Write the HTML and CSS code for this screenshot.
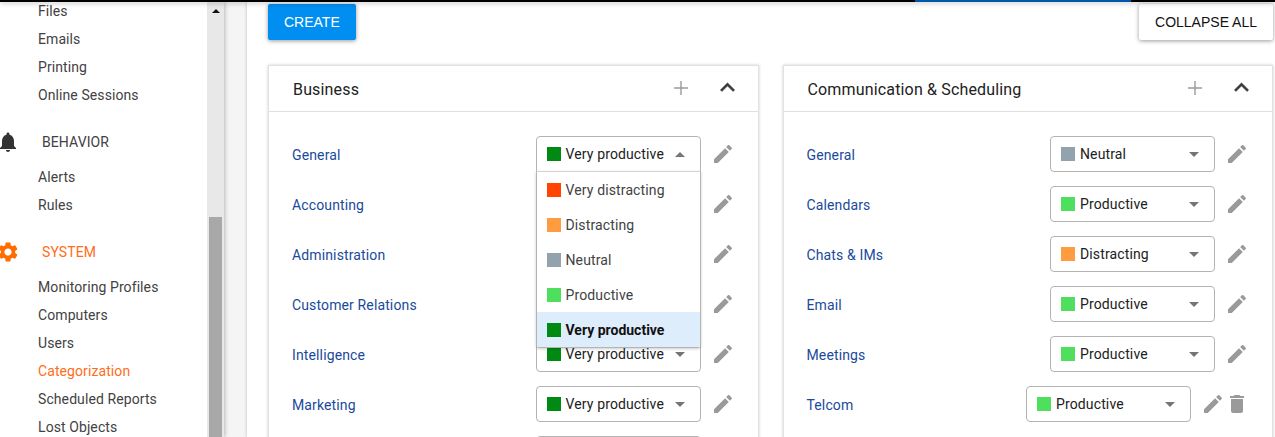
FILE: index.html
```html
<!DOCTYPE html>
<html lang="en">
<head>
<meta charset="utf-8">
<title>Categorization</title>
<link rel="stylesheet" href="styles.css">
<svg class="defs" width="0" height="0">
  <symbol id="i-edit" viewBox="0 0 24 24"><path d="M3 17.25V21h3.75L17.81 9.94l-3.75-3.75L3 17.25zM20.71 7.04c.39-.39.39-1.02 0-1.41l-2.34-2.34c-.39-.39-1.02-.39-1.41 0l-1.83 1.83 3.75 3.75 1.83-1.83z"/></symbol>
  <symbol id="i-trash" viewBox="0 0 24 24"><path d="M6 19c0 1.1.9 2 2 2h8c1.1 0 2-.9 2-2V7H6v12zM19 4h-3.5l-1-1h-5l-1 1H5v2h14V4z"/></symbol>
  <symbol id="i-less" viewBox="0 0 24 24"><path d="M12 8l-6 6 1.41 1.41L12 10.83l4.59 4.58L18 14z"/></symbol>
  <symbol id="i-add" viewBox="0 0 24 24"><path d="M19 12.7h-6.3V19h-1.4v-6.3H5v-1.4h6.3V5h1.4v6.3H19z"/></symbol>
</svg>
</head>
<body>
<div class="topbar"><span class="topbar-progress"></span></div>
<div class="layout">
  <aside class="sidebar">
    <nav class="nav">
      <ul class="nav-list nav-list-first">
        <li>Files</li><li>Emails</li><li>Printing</li><li>Online Sessions</li>
      </ul>
      <div class="nav-head">
        <svg class="nav-icon icon-dark" viewBox="0 0 24 24"><path d="M12 22c1.1 0 2-.9 2-2h-4c0 1.1.89 2 2 2zm6-6v-5c0-3.07-1.64-5.64-4.5-6.32V4c0-.83-.67-1.5-1.5-1.5s-1.5.67-1.5 1.5v.68C7.63 5.36 6 7.92 6 11v5l-2 2v1h16v-1l-2-2z"/></svg>
        <span>BEHAVIOR</span>
      </div>
      <ul class="nav-list">
        <li>Alerts</li><li>Rules</li>
      </ul>
      <div class="nav-head nav-head-active">
        <svg class="nav-icon icon-orange" viewBox="0 0 24 24"><path d="M19.14 12.94c.04-.3.06-.61.06-.94 0-.32-.02-.64-.07-.94l2.03-1.58c.18-.14.23-.41.12-.61l-1.92-3.32c-.12-.22-.37-.29-.59-.22l-2.39.96c-.5-.38-1.03-.7-1.62-.94l-.36-2.54c-.04-.24-.24-.41-.48-.41h-3.84c-.24 0-.43.17-.47.41l-.36 2.54c-.59.24-1.13.57-1.62.94l-2.39-.96c-.22-.08-.47 0-.59.22L2.74 8.87c-.12.21-.08.47.12.61l2.03 1.58c-.05.3-.09.63-.09.94s.02.64.07.94l-2.03 1.58c-.18.14-.23.41-.12.61l1.92 3.32c.12.22.37.29.59.22l2.39-.96c.5.38 1.03.7 1.62.94l.36 2.54c.05.24.24.41.48.41h3.84c.24 0 .44-.17.47-.41l.36-2.54c.59-.24 1.13-.56 1.62-.94l2.39.96c.22.08.47 0 .59-.22l1.92-3.32c.12-.22.07-.47-.12-.61l-2.01-1.58zM12 15.6c-1.98 0-3.6-1.62-3.6-3.6s1.62-3.6 3.6-3.6 3.6 1.62 3.6 3.6-1.62 3.6-3.6 3.6z"/></svg>
        <span>SYSTEM</span>
      </div>
      <ul class="nav-list">
        <li>Monitoring Profiles</li><li>Computers</li><li>Users</li><li class="active">Categorization</li><li>Scheduled Reports</li><li>Lost Objects</li>
      </ul>
    </nav>
    <div class="scrollbar"><span class="scroll-arrow"></span><span class="scroll-thumb"></span></div>
  </aside>
  <div class="gutter"></div>
  <main class="main">
    <div class="toolbar">
      <button class="btn btn-primary">CREATE</button>
      <button class="btn btn-plain">COLLAPSE ALL</button>
    </div>
    <div class="cards">
      <section class="card">
        <header class="card-head">
          <h2>Business</h2>
          <svg class="head-add"><use href="#i-add"/></svg>
          <svg class="head-less"><use href="#i-less"/></svg>
        </header>
        <div class="card-body">
          <div class="row">
            <a class="row-label">General</a>
            <div class="select open">
              <span class="swatch s-vp"></span><span class="select-text">Very productive</span><span class="caret caret-up"></span>
              <ul class="menu">
                <li><span class="swatch s-vd"></span>Very distracting</li>
                <li><span class="swatch s-d"></span>Distracting</li>
                <li><span class="swatch s-n"></span>Neutral</li>
                <li><span class="swatch s-p"></span>Productive</li>
                <li class="selected"><span class="swatch s-vp"></span>Very productive</li>
              </ul>
            </div>
            <svg class="action"><use href="#i-edit"/></svg>
          </div>
          <div class="row"><a class="row-label">Accounting</a><div class="select"><span class="swatch s-vp"></span><span class="select-text">Very productive</span><span class="caret"></span></div><svg class="action"><use href="#i-edit"/></svg></div>
          <div class="row"><a class="row-label">Administration</a><div class="select"><span class="swatch s-vp"></span><span class="select-text">Very productive</span><span class="caret"></span></div><svg class="action"><use href="#i-edit"/></svg></div>
          <div class="row"><a class="row-label">Customer Relations</a><div class="select"><span class="swatch s-vp"></span><span class="select-text">Very productive</span><span class="caret"></span></div><svg class="action"><use href="#i-edit"/></svg></div>
          <div class="row"><a class="row-label">Intelligence</a><div class="select"><span class="swatch s-vp"></span><span class="select-text">Very productive</span><span class="caret"></span></div><svg class="action"><use href="#i-edit"/></svg></div>
          <div class="row"><a class="row-label">Marketing</a><div class="select"><span class="swatch s-vp"></span><span class="select-text">Very productive</span><span class="caret"></span></div><svg class="action"><use href="#i-edit"/></svg></div>
          <div class="row"><span class="row-label"></span><div class="select"></div><svg class="action"><use href="#i-edit"/></svg></div>
        </div>
      </section>
      <section class="card">
        <header class="card-head">
          <h2>Communication &amp; Scheduling</h2>
          <svg class="head-add"><use href="#i-add"/></svg>
          <svg class="head-less"><use href="#i-less"/></svg>
        </header>
        <div class="card-body">
          <div class="row"><a class="row-label">General</a><div class="select"><span class="swatch s-n"></span><span class="select-text">Neutral</span><span class="caret"></span></div><svg class="action"><use href="#i-edit"/></svg></div>
          <div class="row"><a class="row-label">Calendars</a><div class="select"><span class="swatch s-p"></span><span class="select-text">Productive</span><span class="caret"></span></div><svg class="action"><use href="#i-edit"/></svg></div>
          <div class="row"><a class="row-label">Chats &amp; IMs</a><div class="select"><span class="swatch s-d"></span><span class="select-text">Distracting</span><span class="caret"></span></div><svg class="action"><use href="#i-edit"/></svg></div>
          <div class="row"><a class="row-label">Email</a><div class="select"><span class="swatch s-p"></span><span class="select-text">Productive</span><span class="caret"></span></div><svg class="action"><use href="#i-edit"/></svg></div>
          <div class="row"><a class="row-label">Meetings</a><div class="select"><span class="swatch s-p"></span><span class="select-text">Productive</span><span class="caret"></span></div><svg class="action"><use href="#i-edit"/></svg></div>
          <div class="row"><a class="row-label">Telcom</a><div class="select"><span class="swatch s-p"></span><span class="select-text">Productive</span><span class="caret"></span></div><svg class="action"><use href="#i-edit"/></svg><svg class="action action-trash"><use href="#i-trash"/></svg></div>
        </div>
      </section>
    </div>
  </main>
</div>
</body>
</html>
```
FILE: styles.css
```css
* { box-sizing: border-box; }
html, body { margin: 0; height: 100%; overflow: hidden; }
body {
  display: flex;
  flex-direction: column;
  font-family: Roboto, "Liberation Sans", sans-serif;
  font-size: 14px;
  letter-spacing: .13px;
  color: #424242;
  background: #f5f5f5;
}
.defs { position: absolute; }

.topbar {
  flex: none;
  position: relative;
  z-index: 3;
  height: 2px;
  background: #000;
  box-shadow: 0 1px 5px rgba(0, 0, 0, .35);
}
.topbar-progress {
  display: block;
  width: 216px;
  height: 2px;
  margin-left: 915px;
  background: #0057a8;
}

.layout { flex: 1; min-height: 0; display: flex; }

.sidebar {
  flex: none;
  width: 224px;
  display: flex;
  background: #fff;
  overflow: hidden;
  position: relative;
  z-index: 2;
  box-shadow: 1px 0 4px rgba(0, 0, 0, .25);
}
.nav { flex: 1; min-width: 0; margin-top: -5px; padding-left: 38px; letter-spacing: .09px; }
.nav-list { list-style: none; margin: 7px 0 0; padding: 0; }
.nav-list-first { margin-top: 0; }
.nav-list li { height: 28px; line-height: 28px; white-space: nowrap; }
.nav-list .active { color: #ff6d1a; }
.nav-head {
  display: flex;
  align-items: center;
  height: 28px;
  margin: 19px 0 0 -42px;
  color: #424242;
}
.nav-head-active { color: #ff6d1a; }
.nav-icon { flex: none; width: 24px; height: 24px; margin-right: 22px; }
.icon-dark { fill: #333; }
.icon-orange { fill: #ff6d00; }

.scrollbar {
  flex: none;
  width: 17px;
  display: flex;
  flex-direction: column;
  align-items: center;
  background: #e8e8e8;
}
.scroll-arrow {
  flex: none;
  margin-top: 7px;
  border: solid transparent;
  border-width: 0 4px 4px;
  border-bottom-color: #111;
}
.scroll-thumb {
  flex: 1;
  width: 13px;
  margin-top: 204px;
  background: #a8a8a8;
}

.gutter { flex: none; width: 23px; background: #f5f5f5; }

.main {
  flex: 1;
  min-width: 0;
  padding: 2px 2px 0 21px;
  background: #fff;
  box-shadow: 0 0 3px rgba(0, 0, 0, .25);
  overflow: hidden;
}
.toolbar { display: flex; justify-content: space-between; }
.btn {
  height: 36px;
  padding: 0 16px;
  border: 0;
  border-radius: 2px;
  font-family: "Liberation Sans", Arial, sans-serif;
  font-size: 14px;
  letter-spacing: 0;
  box-shadow: 0 1px 4px rgba(0, 0, 0, .4);
}
.btn-primary { background: #008ff0; color: #fff; }
.btn-plain { background: #fff; color: #111; }

.cards {
  display: grid;
  grid-template-columns: 1fr 1fr;
  gap: 24px;
  align-items: start;
  margin-top: 25px;
}
.card {
  min-width: 0;
  border: 1px solid #e2e2e2;
  background: #fff;
  box-shadow: 0 0 3px rgba(0, 0, 0, .2);
}
.card-head {
  display: flex;
  align-items: center;
  height: 46px;
  padding: 0 16px 0 24px;
  border-bottom: 1px solid #e0e0e0;
}
.card-head h2 {
  flex: 1;
  margin: 0;
  padding-top: 2px;
  font-size: 16px;
  font-weight: 400;
  letter-spacing: .16px;
  color: #212121;
}
.head-add { width: 24px; height: 24px; margin-top: -1px; fill: #9a9a9a; }
.head-less { width: 29px; height: 29px; margin: -2px 0 0 20px; fill: #3c3c3c; stroke: #3c3c3c; stroke-width: .3; }

.card-body {
  display: flex;
  flex-direction: column;
  gap: 14px;
  padding: 24px 23px 24px 23px;
}
.row { display: flex; align-items: center; height: 36px; }
.row-label { flex: 1; padding-top: 2px; color: #1a4a9c; }
.action { flex: none; width: 24px; height: 24px; margin-left: 10px; fill: #9a9a9a; }
.action-trash { margin-left: 0; }

.select {
  flex: none;
  position: relative;
  display: flex;
  align-items: center;
  width: 165px;
  height: 36px;
  padding: 0 10px;
  border: 1px solid #b4b4b4;
  border-radius: 4px;
  background: #fff;
  color: #212121;
}
.select.open { border-radius: 4px 4px 0 0; z-index: 1; }
.select-text { flex: 1; white-space: nowrap; }
.swatch { flex: none; width: 14px; height: 14px; margin-right: 5px; }
.s-vd { background: #ff4500; }
.s-d { background: #ff9c40; }
.s-n { background: #93a3ae; }
.s-p { background: #4fdf5f; }
.s-vp { background: #008a14; }
.caret {
  flex: none;
  margin-right: 5px;
  border: solid transparent;
  border-width: 5px 5px 0;
  border-top-color: #757575;
}
.caret-up {
  border-width: 0 5px 5px;
  border-bottom-color: #757575;
}
.menu {
  position: absolute;
  top: 34px;
  left: -1px;
  right: -1px;
  margin: 0;
  padding: 0;
  list-style: none;
  background: #fff;
  border: 1px solid #b4b4b4;
  border-top-color: #d4d4d4;
  border-radius: 0 0 4px 4px;
  box-shadow: 0 1px 3px rgba(0, 0, 0, .2);
  color: #424242;
}
.menu li {
  display: flex;
  align-items: center;
  height: 35px;
  padding: 0 10px;
  white-space: nowrap;
}
.menu .selected { background: #deedfc; color: #111; font-weight: 700; letter-spacing: 0; }
```
